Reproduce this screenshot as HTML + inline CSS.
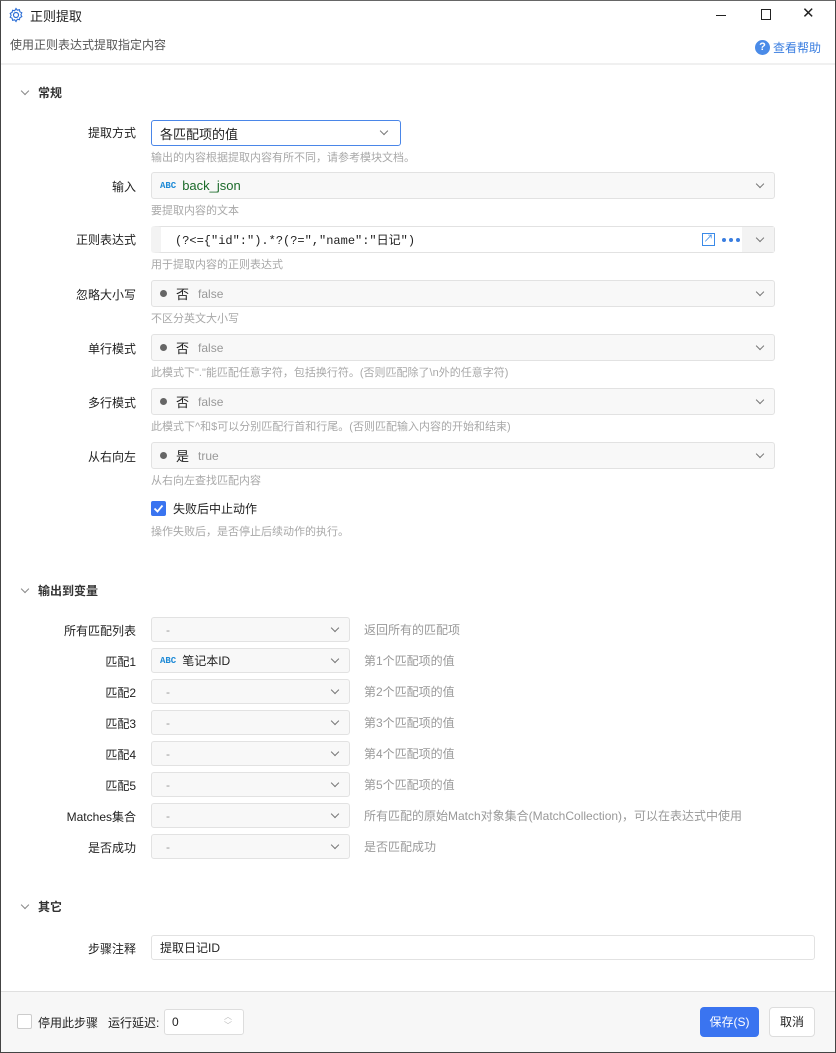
<html><head><style>
*{box-sizing:border-box;margin:0;padding:0}
body{width:836px;height:1053px;background:#fff;font-family:"Liberation Sans","Noto Sans CJK SC",sans-serif;font-size:12px;color:#222;position:relative;overflow:hidden}
.a{position:absolute}
.win{position:absolute;left:0;top:0;width:836px;height:1053px;border:1px solid #444;border-top:1px solid #666}
.lbl{position:absolute;width:136px;text-align:right;font-size:12px;color:#222}
.box{position:absolute;background:#f8f8f8;border:1px solid #e2e2e2;border-radius:3px;font-size:12px;display:flex;align-items:center;padding-left:8px}
.hint{position:absolute;left:151px;font-size:11px;color:#a8a8a8}
.chev{position:absolute;width:6px;height:6px;border-right:1px solid #777;border-bottom:1px solid #777;transform:rotate(45deg)}
.dot{width:7px;height:7px;border-radius:50%;background:#666;display:inline-block;margin-right:9px}
.gray{color:#999;margin-left:9px}
.sec{position:absolute;left:38px;font-size:12px;font-weight:bold;color:#333}
.schev{position:absolute;left:22px;width:6px;height:6px;border-right:1px solid #888;border-bottom:1px solid #888;transform:rotate(45deg)}
.abc{color:#1e8ad6;font-size:9px;font-family:"Liberation Mono",monospace;font-weight:bold;margin-right:6px}
.desc{position:absolute;left:364px;font-size:12px;color:#999}
.ed{position:absolute;width:4px;height:4px;border-radius:50%;background:#3a7ee0}
</style></head><body>
<div class="win"></div>
<svg class="a" style="left:8px;top:7px" width="16" height="16" viewBox="0 0 16 16"><circle cx="8" cy="8" r="2.5" fill="none" stroke="#2d6fd6" stroke-width="1.2"/><path d="M8 1.5l1.3 1.7 2.1-.5.5 2.1 1.9 1-.9 1.9.9 1.9-1.9 1-.5 2.1-2.1-.5L8 14.5l-1.3-1.7-2.1.5-.5-2.1-1.9-1 .9-1.9-.9-1.9 1.9-1 .5-2.1 2.1.5z" fill="none" stroke="#2d6fd6" stroke-width="1.1"/></svg>
<div class="a" style="left:30px;top:6px;font-size:13px">正则提取</div>
<div class="a" style="left:716px;top:15px;width:10px;height:1px;background:#222"></div>
<div class="a" style="left:761px;top:9px;width:10px;height:11px;border:1px solid #222"></div>
<div class="a" style="left:802px;top:4px;font-size:15px;color:#222">✕</div>
<div class="a" style="left:10px;top:36px;font-size:12px;color:#555">使用正则表达式提取指定内容</div>
<div class="a" style="left:755px;top:40px;width:15px;height:15px;border-radius:50%;background:#4a8be8;color:#fff;font-size:11px;font-weight:bold;text-align:center;line-height:15px">?</div>
<div class="a" style="left:773px;top:39px;font-size:12px;color:#3a7ee0">查看帮助</div>
<div class="a" style="left:1px;top:63px;width:834px;height:2px;background:#f0f0f0"></div>

<div class="schev" style="top:88px"></div><div class="sec" style="top:84px">常规</div>

<div class="lbl" style="top:124px">提取方式</div>
<div class="box" style="left:151px;top:120px;width:250px;height:26px;border-color:#4a86e8;background:#fff;font-size:13px">各匹配项的值</div>
<div class="chev" style="left:381px;top:128px"></div>
<div class="hint" style="top:149px">输出的内容根据提取内容有所不同，请参考模块文档。</div>

<div class="lbl" style="top:178px">输入</div>
<div class="box" style="left:151px;top:172px;width:624px;height:27px;font-size:13px;color:#1b6b2a"><span class="abc">ABC</span>back_json</div>
<div class="chev" style="left:757px;top:181px"></div>
<div class="hint" style="top:202px">要提取内容的文本</div>

<div class="lbl" style="top:231px">正则表达式</div>
<div class="box" style="left:151px;top:226px;width:624px;height:27px;padding-left:14px;background:#fff;font-family:'Liberation Mono','Noto Sans CJK SC',monospace;font-size:12px;border-left:10px solid #f3f3f3">(?&lt;={"id":").*?(?=","name":"日记")</div>
<div class="a" style="left:742px;top:227px;width:32px;height:25px;background:#f3f3f3"></div>
<div class="a" style="left:702px;top:233px;width:13px;height:13px;border:1px solid #3a8ae8;color:#3a8ae8;font-size:10px;line-height:11px;text-align:center">↗</div>
<div class="ed" style="left:722px;top:238px"></div><div class="ed" style="left:729px;top:238px"></div><div class="ed" style="left:736px;top:238px"></div>
<div class="chev" style="left:757px;top:235px"></div>
<div class="hint" style="top:256px">用于提取内容的正则表达式</div>

<div class="lbl" style="top:286px">忽略大小写</div>
<div class="box" style="left:151px;top:280px;width:624px;height:27px;font-size:13px"><span class="dot"></span>否<span class="gray" style="font-size:12px">false</span></div>
<div class="chev" style="left:757px;top:289px"></div>
<div class="hint" style="top:310px">不区分英文大小写</div>

<div class="lbl" style="top:340px">单行模式</div>
<div class="box" style="left:151px;top:334px;width:624px;height:27px;font-size:13px"><span class="dot"></span>否<span class="gray" style="font-size:12px">false</span></div>
<div class="chev" style="left:757px;top:343px"></div>
<div class="hint" style="top:364px">此模式下"."能匹配任意字符，包括换行符。(否则匹配除了\n外的任意字符)</div>

<div class="lbl" style="top:394px">多行模式</div>
<div class="box" style="left:151px;top:388px;width:624px;height:27px;font-size:13px"><span class="dot"></span>否<span class="gray" style="font-size:12px">false</span></div>
<div class="chev" style="left:757px;top:397px"></div>
<div class="hint" style="top:418px">此模式下^和$可以分别匹配行首和行尾。(否则匹配输入内容的开始和结束)</div>

<div class="lbl" style="top:448px">从右向左</div>
<div class="box" style="left:151px;top:442px;width:624px;height:27px;font-size:13px"><span class="dot"></span>是<span class="gray" style="font-size:12px">true</span></div>
<div class="chev" style="left:757px;top:451px"></div>
<div class="hint" style="top:472px">从右向左查找匹配内容</div>

<div class="a" style="left:151px;top:501px;width:15px;height:15px;border-radius:2px;background:#3a74f0"></div>
<svg class="a" style="left:151px;top:501px" width="15" height="15"><path d="M3.5 7.5l3 3 5-6" stroke="#fff" stroke-width="1.8" fill="none"/></svg>
<div class="a" style="left:173px;top:500px;font-size:12px">失败后中止动作</div>
<div class="hint" style="top:523px">操作失败后，是否停止后续动作的执行。</div>

<div class="schev" style="top:586px"></div><div class="sec" style="top:582px">输出到变量</div>

<div class="lbl" style="top:622px">所有匹配列表</div>
<div class="box" style="left:151px;top:617px;width:199px;height:25px;color:#999;padding-left:14px">-</div><div class="chev" style="left:332px;top:625px"></div>
<div class="desc" style="top:621px">返回所有的匹配项</div>

<div class="lbl" style="top:653px">匹配1</div>
<div class="box" style="left:151px;top:648px;width:199px;height:25px;font-size:12px"><span class="abc">ABC</span>笔记本ID</div><div class="chev" style="left:332px;top:656px"></div>
<div class="desc" style="top:652px">第1个匹配项的值</div>

<div class="lbl" style="top:684px">匹配2</div>
<div class="box" style="left:151px;top:679px;width:199px;height:25px;color:#999;padding-left:14px">-</div><div class="chev" style="left:332px;top:687px"></div>
<div class="desc" style="top:683px">第2个匹配项的值</div>

<div class="lbl" style="top:715px">匹配3</div>
<div class="box" style="left:151px;top:710px;width:199px;height:25px;color:#999;padding-left:14px">-</div><div class="chev" style="left:332px;top:718px"></div>
<div class="desc" style="top:714px">第3个匹配项的值</div>

<div class="lbl" style="top:746px">匹配4</div>
<div class="box" style="left:151px;top:741px;width:199px;height:25px;color:#999;padding-left:14px">-</div><div class="chev" style="left:332px;top:749px"></div>
<div class="desc" style="top:745px">第4个匹配项的值</div>

<div class="lbl" style="top:777px">匹配5</div>
<div class="box" style="left:151px;top:772px;width:199px;height:25px;color:#999;padding-left:14px">-</div><div class="chev" style="left:332px;top:780px"></div>
<div class="desc" style="top:776px">第5个匹配项的值</div>

<div class="lbl" style="top:808px">Matches集合</div>
<div class="box" style="left:151px;top:803px;width:199px;height:25px;color:#999;padding-left:14px">-</div><div class="chev" style="left:332px;top:811px"></div>
<div class="desc" style="top:807px">所有匹配的原始Match对象集合(MatchCollection)，可以在表达式中使用</div>

<div class="lbl" style="top:839px">是否成功</div>
<div class="box" style="left:151px;top:834px;width:199px;height:25px;color:#999;padding-left:14px">-</div><div class="chev" style="left:332px;top:842px"></div>
<div class="desc" style="top:838px">是否匹配成功</div>

<div class="schev" style="top:902px"></div><div class="sec" style="top:898px">其它</div>

<div class="lbl" style="top:940px">步骤注释</div>
<div class="box" style="left:151px;top:935px;width:664px;height:25px;background:#fff;font-size:12px">提取日记ID</div>

<div class="a" style="left:1px;top:991px;width:834px;height:61px;background:#f7f7f7;border-top:1px solid #e0e0e0"></div>
<div class="a" style="left:17px;top:1014px;width:15px;height:15px;border:1px solid #ccc;border-radius:2px;background:#fff"></div>
<div class="a" style="left:38px;top:1014px;font-size:12px">停用此步骤</div>
<div class="a" style="left:108px;top:1014px;font-size:12px">运行延迟:</div>
<div class="a" style="left:164px;top:1009px;width:80px;height:26px;border:1px solid #ddd;border-radius:3px;background:#fff;padding:5px 7px;font-size:12px">0</div>
<div class="a" style="left:224px;top:1012px;font-size:8px;color:#bbb;line-height:9px">︿<br>﹀</div>
<div class="a" style="left:700px;top:1007px;width:59px;height:30px;border-radius:4px;background:#3a74f0;color:#fff;font-size:12px;text-align:center;line-height:30px">保存(S)</div>
<div class="a" style="left:769px;top:1007px;width:46px;height:30px;border-radius:4px;border:1px solid #ddd;background:#fff;font-size:12px;text-align:center;line-height:28px">取消</div>
</body></html>
